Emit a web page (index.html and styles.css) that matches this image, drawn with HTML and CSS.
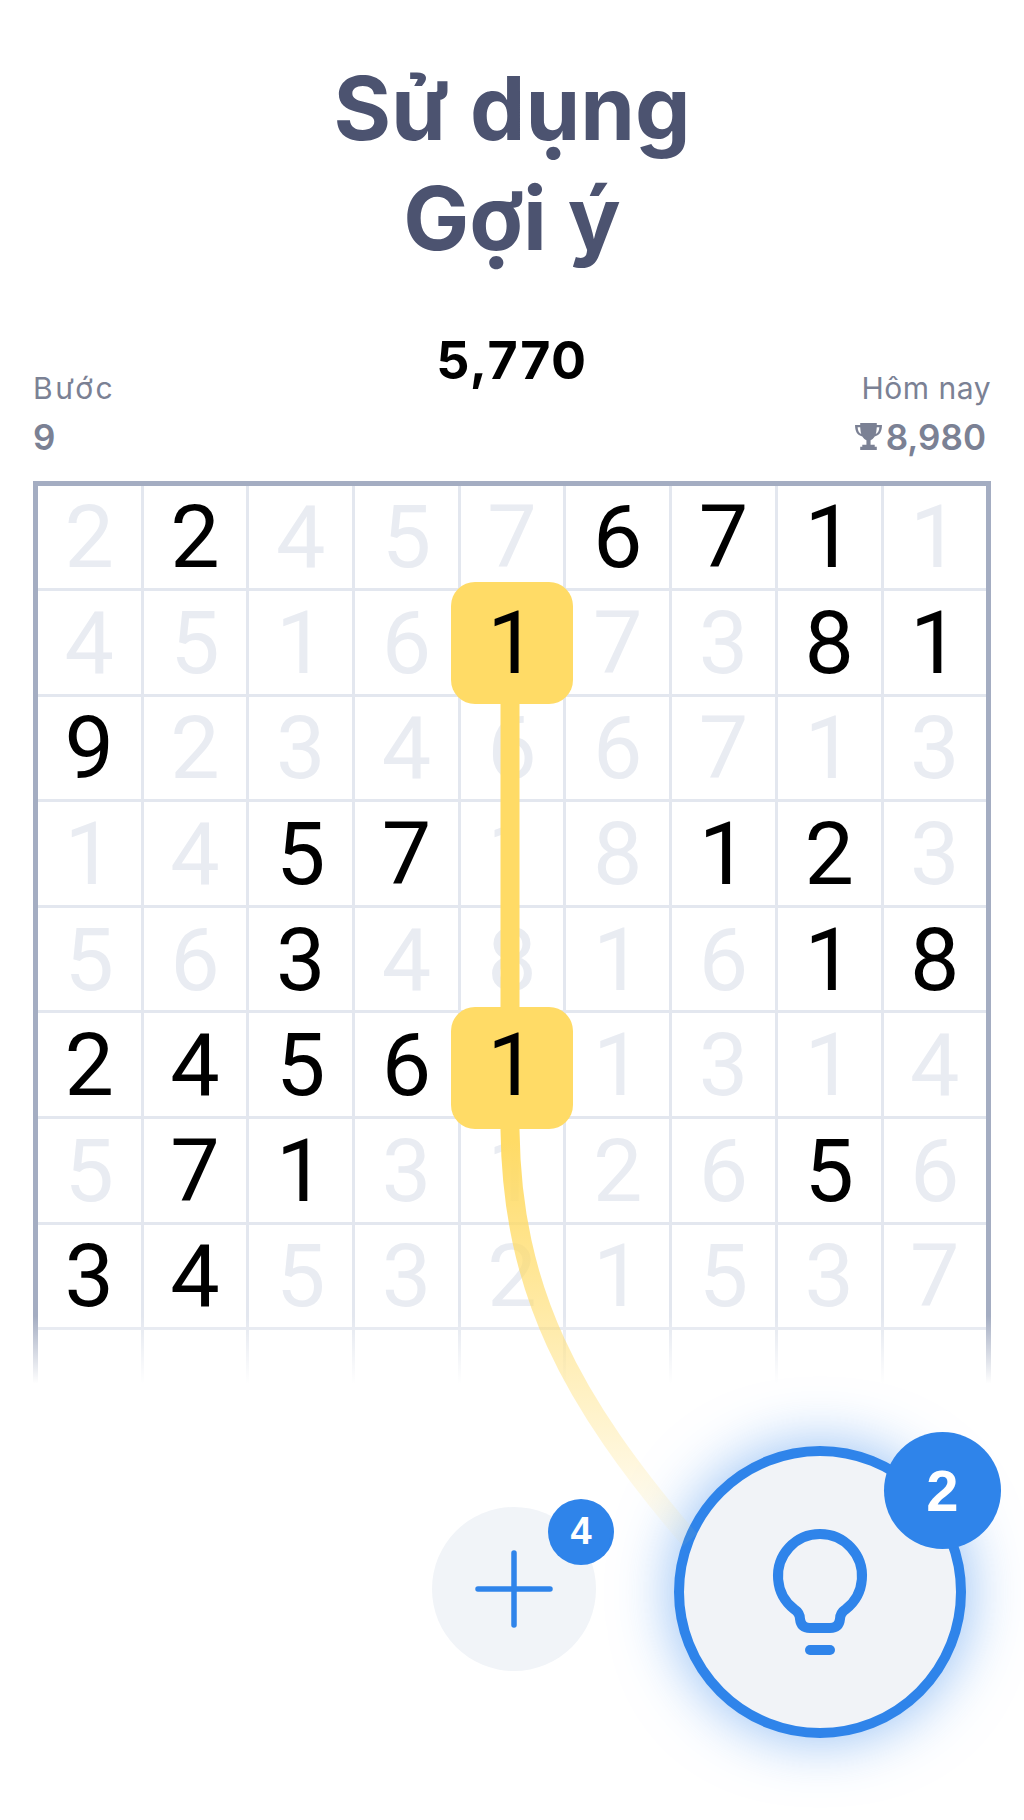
FILE: index.html
```html
<!DOCTYPE html>
<html lang="vi">
<head>
  <meta charset="UTF-8">
  <meta name="viewport" content="width=device-width, initial-scale=1.0">
  <title>Sử dụng Gợi ý</title>
  <link rel="stylesheet" href="styles.css">
</head>
<body>
  <div class="page">
    <h1 class="title">Sử dụng<br>Gợi ý</h1>

    <div class="score-row">
      <div class="stat">
        <div class="stat-label">Bước</div>
        <div class="stat-value">9</div>
      </div>
      <div class="score">5,770</div>
      <div class="stat stat-right">
        <div class="stat-label">Hôm nay</div>
        <div class="stat-value">
          <svg class="trophy" viewBox="0 0 28 28" aria-hidden="true">
            <path fill="#7b8194" d="M6 1h16v2h5c0 6-2 10-7 11-1 2-3 3-4 3.500V22h4v2h2v3H6v-3h2v-2h4v-4.500C11 17 9 16 8 14 3 13 1 9 1 3h5zM3.500 5c.2 3 1.200 5.500 3.500 6.500C6.400 9.500 6.200 7.500 6 5zm21 0H22c-.2 2.500-.4 4.500-1 6.500 2.300-1 3.300-3.500 3.500-6.500z"/>
          </svg>
          8,980
        </div>
      </div>
    </div>

    <div class="board-wrap">
      <div class="board">
        <span class="cell">2</span><span class="cell on">2</span><span class="cell">4</span><span class="cell">5</span><span class="cell">7</span><span class="cell on">6</span><span class="cell on">7</span><span class="cell on">1</span><span class="cell">1</span>
        <span class="cell">4</span><span class="cell">5</span><span class="cell">1</span><span class="cell">6</span><span class="cell on hint">1</span><span class="cell">7</span><span class="cell">3</span><span class="cell on">8</span><span class="cell on">1</span>
        <span class="cell on">9</span><span class="cell">2</span><span class="cell">3</span><span class="cell">4</span><span class="cell">6</span><span class="cell">6</span><span class="cell">7</span><span class="cell">1</span><span class="cell">3</span>
        <span class="cell">1</span><span class="cell">4</span><span class="cell on">5</span><span class="cell on">7</span><span class="cell">1</span><span class="cell">8</span><span class="cell on">1</span><span class="cell on">2</span><span class="cell">3</span>
        <span class="cell">5</span><span class="cell">6</span><span class="cell on">3</span><span class="cell">4</span><span class="cell">8</span><span class="cell">1</span><span class="cell">6</span><span class="cell on">1</span><span class="cell on">8</span>
        <span class="cell on">2</span><span class="cell on">4</span><span class="cell on">5</span><span class="cell on">6</span><span class="cell on hint hint-low">1</span><span class="cell">1</span><span class="cell">3</span><span class="cell">1</span><span class="cell">4</span>
        <span class="cell">5</span><span class="cell on">7</span><span class="cell on">1</span><span class="cell">3</span><span class="cell">1</span><span class="cell">2</span><span class="cell">6</span><span class="cell on">5</span><span class="cell">6</span>
        <span class="cell on">3</span><span class="cell on">4</span><span class="cell">5</span><span class="cell">3</span><span class="cell">2</span><span class="cell">1</span><span class="cell">5</span><span class="cell">3</span><span class="cell">7</span>
        <span class="cell"></span><span class="cell"></span><span class="cell"></span><span class="cell"></span><span class="cell"></span><span class="cell"></span><span class="cell"></span><span class="cell"></span><span class="cell"></span>
      </div>
      <div class="board-fade"></div>
    </div>

    <div class="tools">
      <button class="tool-add">
        <svg class="plus-icon" viewBox="0 0 78 78" aria-hidden="true">
          <path d="M39 3v72M3 39h72" fill="none" stroke="#2f84ea" stroke-width="5.500" stroke-linecap="round"/>
        </svg>
        <span class="badge badge-small">4</span>
      </button>
      <button class="tool-hint">
        <svg class="bulb-icon" viewBox="0 0 100 128" aria-hidden="true">
          <path d="M24 80A42 42 0 1 1 76 80Q70 84 70 90Q69 99 60 99H40Q31 99 30 90Q30 84 24 80Z" fill="none" stroke="#2f84ea" stroke-width="10" stroke-linejoin="round"/>
          <rect x="35" y="116" width="30" height="10" rx="5" fill="#2f84ea"/>
        </svg>
        <span class="badge badge-big">2</span>
      </button>
    </div>

    <!-- duong noi hai o goi y voi nut bong den -->
    <svg class="hint-line" viewBox="0 0 1024 1820" aria-hidden="true">
      <defs>
        <linearGradient id="lineFade" gradientUnits="userSpaceOnUse" x1="0" y1="1140" x2="0" y2="1530">
          <stop offset="0" stop-color="#ffdb66"/>
          <stop offset="1" stop-color="#ffdb66" stop-opacity="0.06"/>
        </linearGradient>
      </defs>
      <path d="M510 640V1130C512 1290 570 1400 690 1540" fill="none" stroke="url(#lineFade)" stroke-width="19"/>
    </svg>
  </div>
</body>
</html>
```

FILE: styles.css
```css
* {
  box-sizing: border-box;
}
body {
  margin: 0;
  background: #fff;
  font-family: Inter, "Liberation Sans", sans-serif;
}
.page {
  position: relative;
  width: 1024px;
  height: 1820px;
  overflow: hidden;
  padding: 53px 33px 0;
}
.title {
  margin: 0;
  font-size: 88px;
  line-height: 110px;
  font-weight: 700;
  text-align: center;
  color: #4c5370;
}
.score-row {
  display: grid;
  grid-template-columns: 1fr auto 1fr;
  margin-top: 57.500px;
  height: 150px;
}
.stat {
  padding-top: 39px;
}
.stat-right {
  text-align: right;
}
.stat-label {
  font-size: 30px;
  line-height: 36px;
  color: #7b8194;
  letter-spacing: 2.500px;
}
.stat-right .stat-label {
  letter-spacing: 0.500px;
}
.stat-value {
  display: flex;
  align-items: center;
  margin-top: 13px;
  font-size: 35px;
  line-height: 36px;
  font-weight: 600;
  color: #7b8194;
}
.stat-right .stat-value {
  justify-content: flex-end;
  gap: 3px;
  padding-right: 5px;
}
.trophy {
  width: 29px;
  height: 29px;
}
.score {
  font-size: 52px;
  line-height: 60px;
  font-weight: 700;
  letter-spacing: 1.500px;
  color: #000;
}
.board-wrap {
  position: relative;
  height: 925px;
  overflow: hidden;
}
.board {
  display: grid;
  grid-template-columns: repeat(8, 105.700px) 1fr;
  grid-auto-rows: 105.600px;
  border: 5px solid #a4adc2;
}
.cell {
  position: relative;
  display: flex;
  align-items: center;
  justify-content: center;
  border-right: 3px solid #e3e7ef;
  border-bottom: 3px solid #e3e7ef;
  font-family: Roboto, "Liberation Sans", sans-serif;
  font-size: 88px;
  color: #e9ecf2;
}
.cell:nth-child(9n) {
  border-right: 0;
}
.on {
  color: #000;
}
.hint {
  z-index: 2;
}
.hint::before {
  content: "";
  position: absolute;
  inset: -9px -10px -10px -10px;
  z-index: -1;
  border-radius: 24px;
  background: #ffdb66;
}
.hint-low::before {
  inset: -6px -10px -13px -10px;
}
.board-fade {
  position: absolute;
  left: 0;
  right: 0;
  bottom: 0;
  height: 90px;
  background: linear-gradient(rgba(255, 255, 255, 0), #fff 75%);
}
.tools {
  display: grid;
  grid-template-columns: 1fr 164px 1fr;
  align-items: start;
  margin-top: 40px;
}
.tool-add,
.tool-hint {
  position: relative;
  display: flex;
  align-items: center;
  justify-content: center;
  padding: 0;
  border-radius: 50%;
  background: #f1f4f8;
}
.tool-add {
  grid-column: 2;
  width: 164px;
  height: 164px;
  margin: 61px 0 0 2px;
  border: 0;
}
.tool-hint {
  grid-column: 3;
  width: 292px;
  height: 292px;
  margin-left: 80px;
  border: 10px solid #2f84ea;
  background: #f1f3f7;
  box-shadow: 0 0 60px rgba(47, 132, 234, 0.55);
}
.plus-icon {
  width: 78px;
  height: 78px;
}
.bulb-icon {
  width: 100px;
  height: 128px;
  margin-top: 3px;
}
.badge {
  position: absolute;
  display: flex;
  align-items: center;
  justify-content: center;
  border-radius: 50%;
  background: #2f84ea;
  color: #fff;
  font-weight: 700;
}
.badge-small {
  top: -8px;
  right: -18px;
  width: 66px;
  height: 66px;
  font-size: 38px;
}
.badge-big {
  top: -24px;
  right: -45px;
  width: 117px;
  height: 117px;
  font-size: 58px;
}
.hint-line {
  position: absolute;
  top: 0;
  left: 0;
  z-index: 1;
  width: 1024px;
  height: 1820px;
  pointer-events: none;
}
```
